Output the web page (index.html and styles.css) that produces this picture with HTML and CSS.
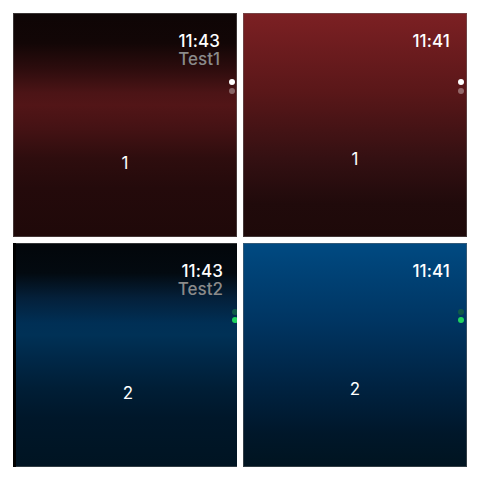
FILE: index.html
```html
<!DOCTYPE html>
<html>
<head>
<meta charset="utf-8">
<link rel="stylesheet" href="styles.css">
</head>
<body>
<div class="grid">
  <div class="panel">
    <div class="screen red-band">
      <div class="header">
        <div class="time">11:43</div>
        <div class="title">Test1</div>
      </div>
      <div class="number">1</div>
      <div class="dots dots-near">
        <span class="dot white"></span>
        <span class="dot white-dim"></span>
      </div>
    </div>
  </div>
  <div class="panel">
    <div class="screen red-linear">
      <div class="header">
        <div class="time">11:41</div>
      </div>
      <div class="number number-up">1</div>
      <div class="dots">
        <span class="dot white"></span>
        <span class="dot white-dim"></span>
      </div>
    </div>
  </div>
  <div class="panel panel-shift">
    <div class="screen blue-band">
      <div class="header">
        <div class="time">11:43</div>
        <div class="title">Test2</div>
      </div>
      <div class="number">2</div>
      <div class="dots dots-near dots-tight">
        <span class="dot green-dim"></span>
        <span class="dot green"></span>
      </div>
    </div>
  </div>
  <div class="panel">
    <div class="screen blue-linear">
      <div class="header">
        <div class="time">11:41</div>
      </div>
      <div class="number number-up">2</div>
      <div class="dots dots-tight">
        <span class="dot green-dim"></span>
        <span class="dot green"></span>
      </div>
    </div>
  </div>
</div>
</body>
</html>
```
FILE: styles.css
```css
html, body {
  margin: 0;
  padding: 0;
  background: #ffffff;
}
body {
  font-family: Inter, Roboto, "Noto Sans", sans-serif;
}
.grid {
  display: grid;
  grid-template-columns: 224px 224px;
  grid-template-rows: 224px 224px;
  gap: 6px;
  padding: 13px;
}
.panel {
  position: relative;
  overflow: hidden;
  background: #000;
}
.screen {
  position: relative;
  width: 224px;
  height: 224px;
  display: flex;
  flex-direction: column;
  box-sizing: border-box;
  box-shadow: inset 0 0 0 1px rgba(110,110,110,0.45);
}
.panel-shift .screen {
  margin-left: 3px;
  box-shadow: inset 0 1px 0 rgba(110,110,110,0.45), inset 0 -1px 0 rgba(110,110,110,0.45);
}
.red-band {
  background: linear-gradient(to bottom,
    #0e0505 0px, #120606 30px, #2c0c0d 55px, #4c1416 80px, #521517 92px,
    #451214 115px, #2e0d0e 145px, #240a0b 175px, #1f0909 224px);
}
.red-linear {
  background: linear-gradient(to bottom, #7c2023 0%, #5a1719 35%, #341012 65%, #200a0b 85%, #1e0909 100%);
}
.blue-band {
  background: linear-gradient(to bottom,
    #02060a 0px, #030a10 30px, #04203a 55px, #002f55 80px, #003156 92px,
    #002848 115px, #001e36 145px, #00172a 175px, #001422 224px);
}
.blue-linear {
  background: linear-gradient(to bottom, #004a82 0%, #003562 35%, #002240 65%, #00172a 85%, #001420 100%);
}
.header {
  display: flex;
  flex-direction: column;
  align-items: flex-end;
  padding: 18px 17px 0 0;
}
.time {
  color: #ffffff;
  font-size: 17px;
  font-weight: 500;
  line-height: 20px;
  letter-spacing: 0.1px;
}
.title {
  color: #8a8a8a;
  font-size: 17px;
  font-weight: 500;
  line-height: 17px;
  margin-top: 0;
}
.number {
  position: absolute;
  left: 0;
  right: 0;
  top: 140px;
  text-align: center;
  color: #ffffff;
  font-size: 17px;
  line-height: 20px;
}
.number-up {
  top: 136px;
}
.dots {
  position: absolute;
  right: 3px;
  top: 66px;
  display: flex;
  flex-direction: column;
  gap: 3px;
}
.dots-near {
  right: 2px;
}
.dots-tight {
  gap: 2px;
}
.dot {
  display: block;
  width: 6px;
  height: 6px;
  border-radius: 50%;
}
.white { background: #ffffff; }
.white-dim { background: rgba(255,255,255,0.35); }
.green { background: #1fd35e; }
.green-dim { background: #0f5a48; }
```
